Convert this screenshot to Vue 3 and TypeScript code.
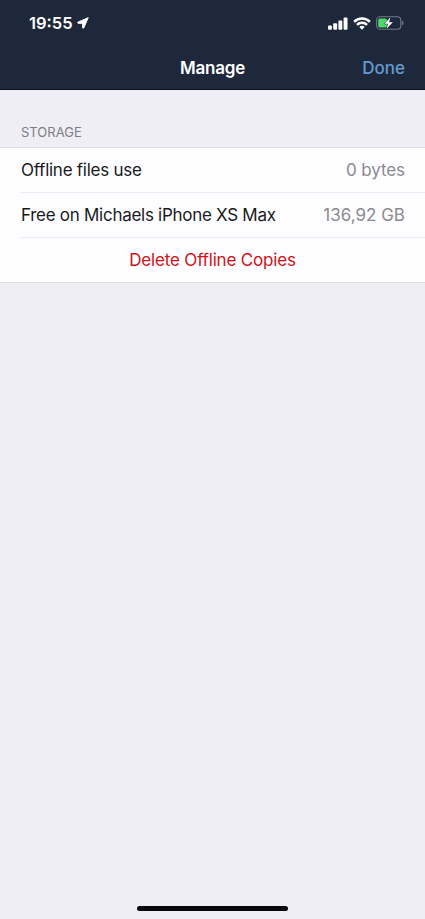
<script setup lang="ts">
interface StorageRow {
  id: string
  label: string
  value: string
}

const rows: StorageRow[] = [
  { id: 'used', label: 'Offline files use', value: '0 bytes' },
  { id: 'free', label: 'Free on Michaels iPhone XS Max', value: '136,92 GB' },
]
</script>

<template>
  <div class="screen">
    <header class="header">
      <div class="status">
        <div class="clock">
          <span class="time">19:55</span>
          <svg class="arrow" width="12" height="12" viewBox="0 0 12 12">
            <path d="M11.2 .7 .8 5.2Q.2 5.8 1 6.3H5.6V10.9Q6.1 11.7 6.7 11Z" fill="#fff" stroke="#fff" stroke-width="1" stroke-linejoin="round" />
          </svg>
        </div>
        <div class="indicators">
          <svg width="20" height="13" viewBox="0 0 20 13" fill="#fff">
            <rect x="0" y="8.5" width="3.9" height="4.2" rx="1" />
            <rect x="5.2" y="6.2" width="3.9" height="6.5" rx="1" />
            <rect x="10.4" y="3.4" width="3.9" height="9.3" rx="1" />
            <rect x="15.6" y=".5" width="3.9" height="12.2" rx="1" />
          </svg>
          <svg width="18" height="13" viewBox="0 0 18 13" fill="none" stroke="#fff" stroke-width="2.5">
            <path d="M1.1 4.8a11.3 11.3 0 0 1 15.8 0" />
            <path d="M4 7.8a7.1 7.1 0 0 1 10 0" />
            <path d="M9 12.7 6.3 9.9a4 4 0 0 1 5.4 0Z" fill="#fff" stroke="none" />
          </svg>
          <svg width="28" height="14" viewBox="0 0 28 14">
            <rect x=".6" y=".8" width="24.2" height="12.4" rx="3.4" fill="none" stroke="#71788a" stroke-width="1.1" />
            <path d="M26 4.7q1.6.6 1.6 2.3T26 9.3Z" fill="#71788a" />
            <rect x="2.2" y="2.4" width="8.8" height="9.2" rx="1.7" fill="#4cd964" />
            <path d="M14.2 1.4 8.3 7.7h3.6L10.7 12.8 16.8 6.3h-3.6Z" fill="#fff" stroke="#1e283b" stroke-width="1" paint-order="stroke" />
          </svg>
        </div>
      </div>
      <nav class="nav">
        <h1 class="title">Manage</h1>
        <button class="done" type="button">Done</button>
      </nav>
    </header>

    <main class="content">
      <h2 class="section-title">STORAGE</h2>
      <section class="list">
        <div v-for="row in rows" :key="row.id" class="row">
          <span :class="['label', row.id]">{{ row.label }}</span>
          <span :class="['value', row.id]">{{ row.value }}</span>
        </div>
        <button class="delete" type="button"><span>Delete Offline Copies</span></button>
      </section>
    </main>

    <footer class="footer"><div class="home-bar"></div></footer>
  </div>
</template>

<style>
body {
  margin: 0;
  background: #efeef4;
}
</style>

<style scoped>
.screen {
  display: flex;
  flex-direction: column;
  height: 919px;
  background: #efeef4;
  font-family: Inter, "Liberation Sans", sans-serif;
  color: #1a1a1c;
}
h1, h2 {
  margin: 0;
}
button {
  border: 0;
  padding: 0;
  background: none;
  font-family: inherit;
}
.header {
  box-sizing: border-box;
  height: 90px;
  background: #1e283b;
  border-bottom: 1px solid #0c111b;
}
.status {
  display: flex;
  justify-content: space-between;
  align-items: center;
  height: 46px;
  padding: 0 21px 0 29px;
}
.clock {
  display: flex;
  align-items: center;
  gap: 4px;
  color: #fff;
}
.time {
  font-size: 16.5px;
  font-weight: 600;
  line-height: 20px;
}
.indicators {
  display: flex;
  align-items: center;
  gap: 5px;
}
.nav {
  display: grid;
  grid-template-columns: 1fr auto 1fr;
  align-items: center;
  height: 44px;
  padding: 0 20px;
}
.title {
  grid-column: 2;
  color: #fff;
  font-size: 17px;
  font-weight: 600;
  letter-spacing: -0.2px;
  line-height: 22px;
}
.done {
  justify-self: end;
  color: #659bd2;
  font-size: 17px;
  font-weight: 500;
  line-height: 22px;
}
.content {
  flex: 1;
}
.section-title {
  height: 57px;
  box-sizing: border-box;
  padding: 33px 21px 0;
  color: #7e7e83;
  font-size: 13px;
  font-weight: 400;
  line-height: 18px;
}
.list {
  border-top: 1px solid #e2e1e6;
  border-bottom: 1px solid #dddce1;
  background: #fefdff;
}
.row {
  display: flex;
  justify-content: space-between;
  align-items: center;
  box-sizing: border-box;
  height: 45px;
  margin-left: 21px;
  padding-right: 20px;
  border-bottom: 1px solid #ecebef;
  font-size: 17px;
  font-weight: 400;
  white-space: nowrap;
}
.label.used {
  letter-spacing: -0.26px;
}
.label.free {
  letter-spacing: -0.28px;
}
.value {
  color: #8b8a8f;
}
.value.used {
  letter-spacing: -0.1px;
}
.delete {
  display: block;
  width: 100%;
  height: 44px;
  color: #d01217;
  font-size: 17px;
  font-weight: 400;
  letter-spacing: -0.18px;
}
.footer {
  display: flex;
  justify-content: center;
  padding-bottom: 8px;
}
.home-bar {
  width: 151px;
  height: 5px;
  border-radius: 3px;
  background: #09090b;
}
</style>
